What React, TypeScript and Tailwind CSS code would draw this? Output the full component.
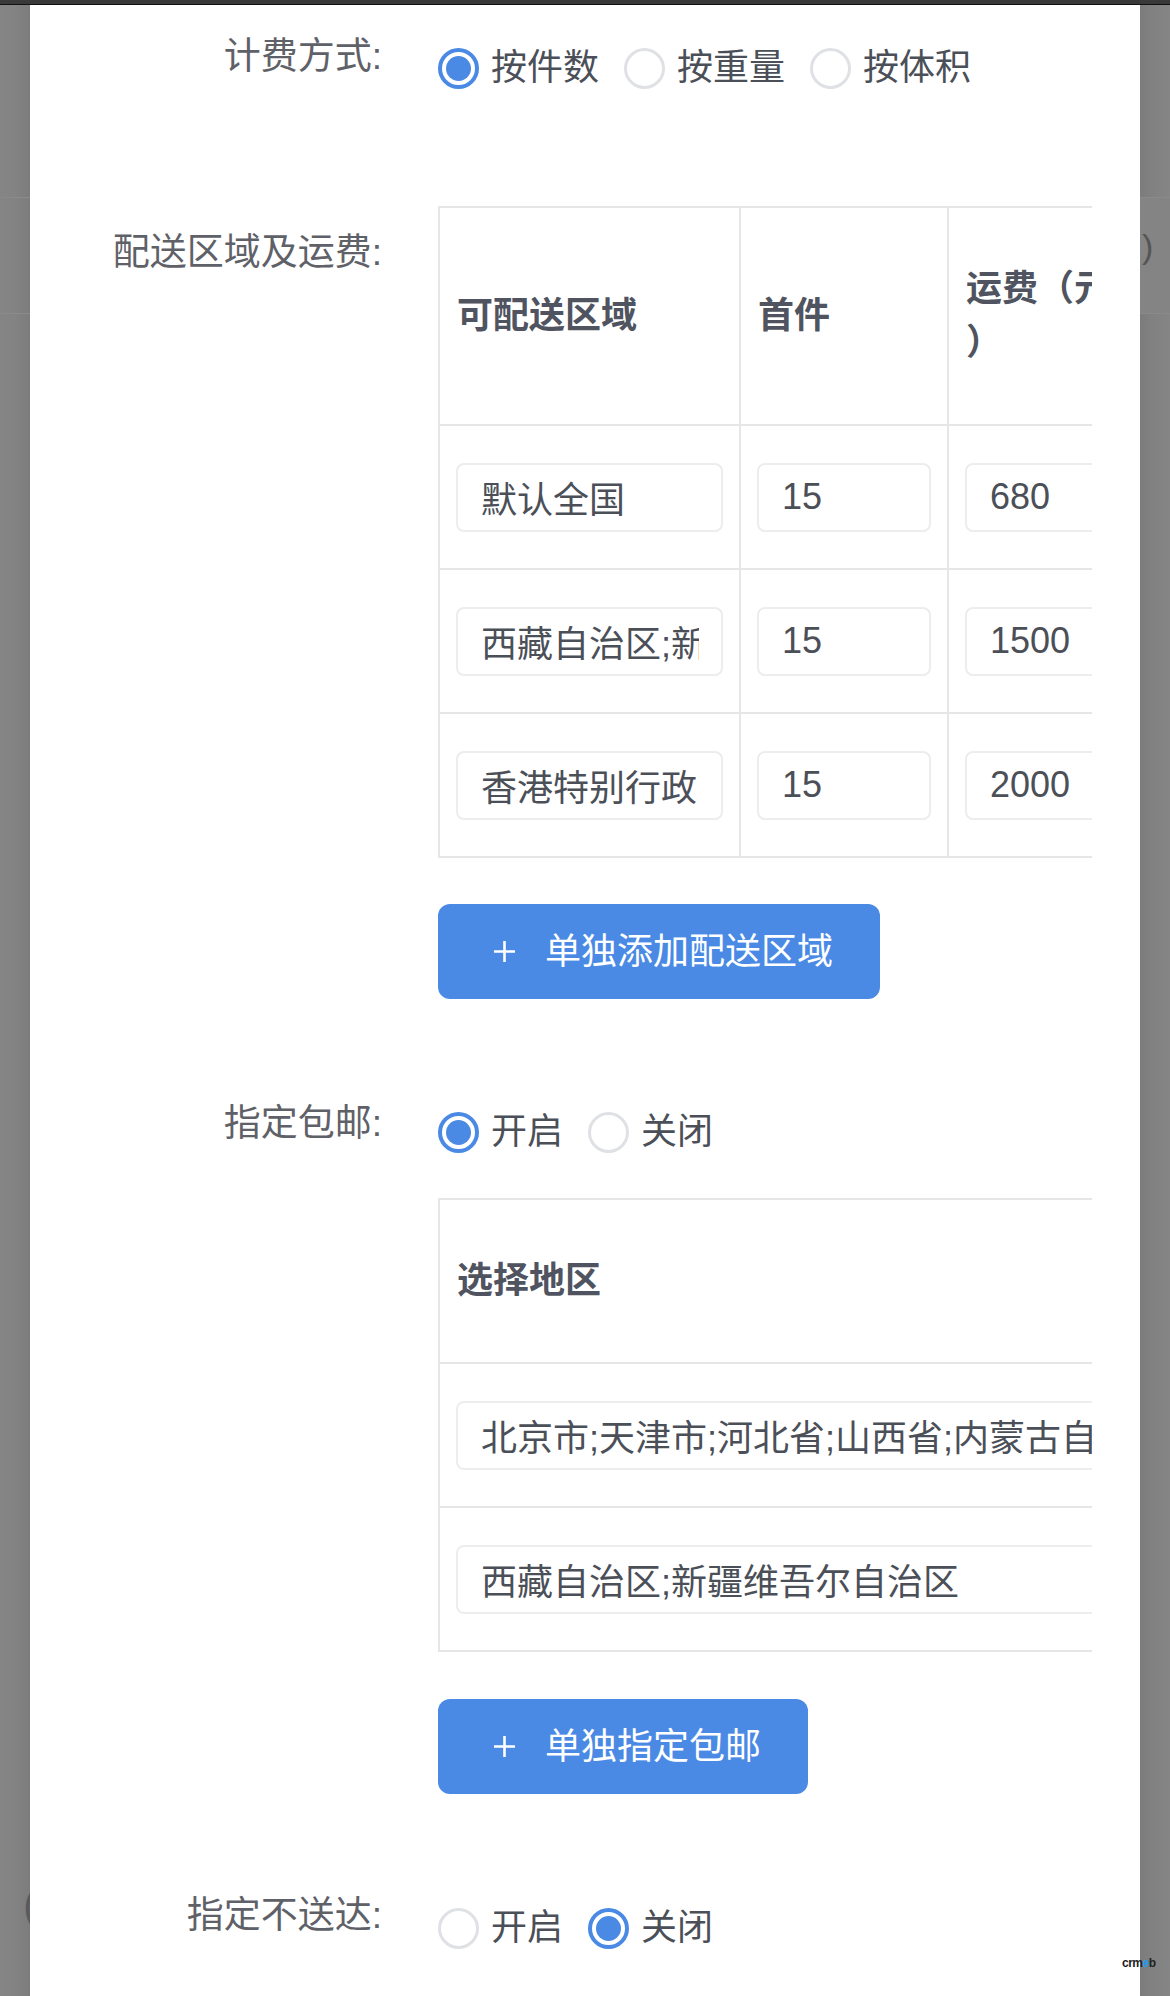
import React from 'react';

const FONT = "font-['Liberation_Sans','Noto_Sans_CJK_SC',sans-serif]";

function Radio({ label, checked }: { label: string; checked?: boolean }) {
  return (
    <div className="flex items-center mr-[25px]">
      {checked ? (
        <span className="w-[41px] h-[41px] rounded-full border-[4px] border-[#4a8ae5] flex items-center justify-center">
          <span className="w-[25px] h-[25px] rounded-full bg-[#4a8ae5]" />
        </span>
      ) : (
        <span className="w-[41px] h-[41px] rounded-full border-[3px] border-[#dfe1e5]" />
      )}
      <span className="ml-[12px] text-[36px] leading-[52px] text-[#4b4f58]">{label}</span>
    </div>
  );
}

function Field({ value }: { value: string }) {
  return (
    <input
      readOnly
      value={value}
      className={`w-full h-[69px] rounded-[8px] border-2 border-[#ededed] pl-[23px] pr-[22px] text-[36px] text-[#4b4f58] bg-white outline-none ${FONT}`}
    />
  );
}

function AddButton({ text, className }: { text: string; className?: string }) {
  return (
    <button className={`flex items-center h-[95px] pl-[54px] pr-[47px] rounded-[12px] bg-[#4a8ae5] text-white ${className ?? ''}`}>
      <svg width="25" height="25" viewBox="0 0 25 25" className="shrink-0">
        <path d="M12.5 2v21M2 12.5h21" stroke="white" strokeWidth="2.6" />
      </svg>
      <span className="ml-[28px] text-[36px] leading-[52px]">{text}</span>
    </button>
  );
}

const feeRows = [
  { area: '默认全国', first: '15', fee: '680' },
  { area: '西藏自治区;新疆维吾尔自治区', first: '15', fee: '1500' },
  { area: '香港特别行政区;澳门特别行政区;台湾省', first: '15', fee: '2000' },
];

const freeRows = [
  '北京市;天津市;河北省;山西省;内蒙古自治区;辽宁省;吉林省;黑龙江省',
  '西藏自治区;新疆维吾尔自治区',
];

const labelCls = 'w-[352px] text-right text-[37px] leading-[52px] text-[#5f6168]';
const headCls = 'text-[36px] leading-[54px] font-bold text-[#4f5460]';

export default function App() {
  return (
    <div className={`relative w-[1170px] h-[1996px] bg-[#808080] flex flex-col overflow-hidden ${FONT}`}>
      <div className="h-[5px] bg-[#393939] border-b border-[#111]" />
      <div className="flex flex-1">
        {/* left backdrop */}
        <div className="w-[30px] flex flex-col overflow-hidden bg-[linear-gradient(90deg,#858585_0,#838383_50%,#7c7c7c_100%)] text-[#5a5a5e]">
          <div className="mt-[192px] h-[117px] border-y border-[#8a8a8a]" />
          <div className="mt-[1566px] pl-[23px] text-[44px] leading-[50px] whitespace-nowrap">(</div>
        </div>

        {/* dialog panel */}
        <div className="w-[1110px] bg-white pt-[26px]">
          {/* 计费方式 */}
          <div className="flex items-start">
            <div className={labelCls}>计费方式:</div>
            <div className="ml-[56px] w-[654px] pt-[11px] flex items-center">
              <Radio label="按件数" checked />
              <Radio label="按重量" />
              <Radio label="按体积" />
            </div>
          </div>

          {/* 配送区域及运费 */}
          <div className="flex items-start mt-[112px]">
            <div className={`${labelCls} pt-[21px]`}>配送区域及运费:</div>
            <div className="ml-[56px] w-[654px]">
              <div className="w-[654px] overflow-hidden">
                <div className="w-[1100px] border-l-2 border-t-2 border-[#e6e6e6]">
                  <div className={`flex border-b-2 border-[#e6e6e6] ${headCls}`}>
                    <div className="w-[301px] border-r-2 border-[#e6e6e6] px-[17px] flex items-center">可配送区域</div>
                    <div className="w-[208px] border-r-2 border-[#e6e6e6] px-[17px] flex items-center">首件</div>
                    <div className="w-[210px] border-r-2 border-[#e6e6e6] px-[17px] py-[54px]">
                      运费（元
                      <br />）
                    </div>
                    <div className="w-[208px] border-r-2 border-[#e6e6e6] px-[17px] flex items-center">续件</div>
                    <div className="w-[170px] px-[17px] flex items-center">续费</div>
                  </div>
                  {feeRows.map((r) => (
                    <div key={r.area} className="flex h-[144px] border-b-2 border-[#e6e6e6]">
                      <div className="w-[301px] border-r-2 border-[#e6e6e6] px-[16px] flex items-center">
                        <Field value={r.area} />
                      </div>
                      <div className="w-[208px] border-r-2 border-[#e6e6e6] px-[16px] flex items-center">
                        <Field value={r.first} />
                      </div>
                      <div className="w-[210px] border-r-2 border-[#e6e6e6] px-[16px] flex items-center">
                        <Field value={r.fee} />
                      </div>
                      <div className="w-[208px] border-r-2 border-[#e6e6e6] px-[16px] flex items-center">
                        <Field value="1" />
                      </div>
                      <div className="w-[170px] px-[16px] flex items-center">
                        <Field value="0" />
                      </div>
                    </div>
                  ))}
                </div>
              </div>
              <AddButton text="单独添加配送区域" className="mt-[46px]" />
            </div>
          </div>

          {/* 指定包邮 */}
          <div className="flex items-start mt-[99px]">
            <div className={labelCls}>指定包邮:</div>
            <div className="ml-[56px] w-[654px] pt-[8px]">
              <div className="flex items-center">
                <Radio label="开启" checked />
                <Radio label="关闭" />
              </div>
              <div className="mt-[40px] w-[654px] overflow-hidden">
                <div className="w-[1100px] border-l-2 border-t-2 border-[#e6e6e6]">
                  <div className={`flex border-b-2 border-[#e6e6e6] ${headCls}`}>
                    <div className="w-[760px] border-r-2 border-[#e6e6e6] px-[17px] py-[54px]">选择地区</div>
                    <div className="flex-1 px-[17px] py-[54px]">包邮件数</div>
                  </div>
                  {freeRows.map((r) => (
                    <div key={r} className="flex h-[144px] border-b-2 border-[#e6e6e6]">
                      <div className="w-[760px] border-r-2 border-[#e6e6e6] px-[16px] flex items-center">
                        <Field value={r} />
                      </div>
                      <div className="flex-1 px-[16px] flex items-center">
                        <Field value="1" />
                      </div>
                    </div>
                  ))}
                </div>
              </div>
              <AddButton text="单独指定包邮" className="mt-[47px]" />
            </div>
          </div>

          {/* 指定不送达 */}
          <div className="flex items-start mt-[96px]">
            <div className={labelCls}>指定不送达:</div>
            <div className="ml-[56px] w-[654px] pt-[12px] flex items-center">
              <Radio label="开启" />
              <Radio label="关闭" checked />
            </div>
          </div>
        </div>

        {/* right backdrop */}
        <div className="w-[30px] flex flex-col bg-[linear-gradient(90deg,#7c7c7c_0,#828282_50%,#858585_100%)] text-[#555]">
          <div className="mt-[192px] h-[117px] border-y border-[#8a8a8a] bg-[#848484] text-[34px] leading-[40px] pt-[28px] pl-[2px] overflow-hidden">)</div>
        </div>
      </div>

      {/* watermark */}
      <div className="absolute left-[1122px] top-[1956px] text-[12px] leading-[14px] tracking-[-0.5px] text-[#222] font-bold">
        crm<span className="text-[#1e9bf0]">e</span>b
      </div>
    </div>
  );
}
